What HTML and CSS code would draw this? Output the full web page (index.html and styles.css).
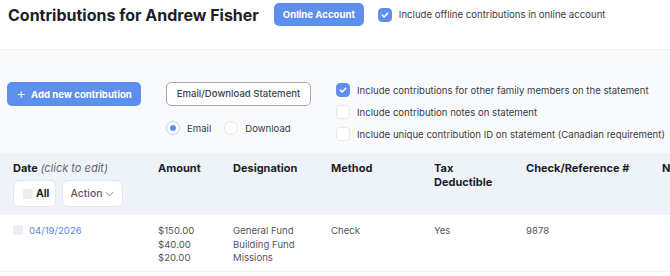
FILE: index.html
```html
<!DOCTYPE html>
<html lang="en">
<head>
  <meta charset="UTF-8">
  <title>Contributions</title>
  <link rel="stylesheet" href="styles.css">
</head>
<body>

  <header class="top">
    <h1>Contributions for Andrew Fisher</h1>
    <button class="btn btn-primary online">Online Account</button>
    <label class="check">
      <span class="box checked"><svg viewBox="0 0 14 14"><path d="M3.8 7.2 L6 9.3 L10.2 4.9" /></svg></span>
      Include offline contributions in online account
    </label>
  </header>

  <section class="toolbar">
    <button class="btn btn-primary add"><span class="plus">+</span>Add new contribution</button>

    <div class="statement">
      <button class="btn btn-outline">Email/Download Statement</button>
      <div class="radios">
        <label class="radio"><span class="dot on"></span>Email</label>
        <label class="radio"><span class="dot"></span>Download</label>
      </div>
    </div>

    <div class="options">
      <label class="check">
        <span class="box checked"><svg viewBox="0 0 14 14"><path d="M3.8 7.2 L6 9.3 L10.2 4.9" /></svg></span>
        Include contributions for other family members on the statement
      </label>
      <label class="check">
        <span class="box"></span>
        Include contribution notes on statement
      </label>
      <label class="check">
        <span class="box"></span>
        Include unique contribution ID on statement (Canadian requirement)
      </label>
    </div>
  </section>

  <table class="contribs">
    <colgroup>
      <col class="c-date">
      <col class="c-amount">
      <col class="c-desig">
      <col class="c-method">
      <col class="c-tax">
      <col class="c-ref">
      <col class="c-notes">
    </colgroup>
    <thead>
      <tr>
        <th class="first">
          Date <em>(click to edit)</em>
          <div class="head-tools">
            <button class="btn btn-light all"><span class="mini"></span>All</button>
            <button class="btn btn-light action">Action
              <svg viewBox="0 0 10 6"><path d="M1 1 L5 5 L9 1" /></svg>
            </button>
          </div>
        </th>
        <th>Amount</th>
        <th>Designation</th>
        <th>Method</th>
        <th>Tax<br>Deductible</th>
        <th>Check/Reference #</th>
        <th>Notes</th>
      </tr>
    </thead>
    <tbody>
      <tr>
        <td class="first"><span class="mini"></span><a href="#">04/19/2026</a></td>
        <td>$150.00<br>$40.00<br>$20.00</td>
        <td>General Fund<br>Building Fund<br>Missions</td>
        <td>Check</td>
        <td>Yes</td>
        <td>9878</td>
        <td></td>
      </tr>
    </tbody>
  </table>

</body>
</html>
```

FILE: styles.css
```css
body {
  margin: 0;
  font-family: Inter, "Noto Sans", sans-serif;
  font-size: 9.6px;
  color: #3a3a44;
  background: #fff;
  overflow: hidden;
  white-space: nowrap;
}

.top {
  display: flex;
  align-items: flex-start;
  height: 50px;
  padding: 3px 8px 0;
  box-sizing: border-box;
  border-bottom: 1px solid #f1f2f4;
}

h1 {
  margin: 0 15px 0 0;
  font-size: 16px;
  font-weight: 700;
  color: #1d1d27;
  line-height: 24px;
}

.btn {
  font-family: inherit;
  font-size: 9.6px;
  border-radius: 5px;
  cursor: pointer;
  line-height: 12px;
  white-space: nowrap;
  flex-shrink: 0;
}

.btn-primary {
  background: #5f8fec;
  color: #fff;
  border: none;
  font-weight: 700;
  height: 23px;
  padding: 0;
}

.online {
  width: 90px;
  margin-right: 14px;
}

.check {
  display: flex;
  align-items: center;
  gap: 7px;
  height: 23px;
  color: #3a3a44;
}

.box {
  width: 14px;
  height: 14px;
  flex-shrink: 0;
  box-sizing: border-box;
  border: 1px solid #e6e8ec;
  border-radius: 4px;
  background: #fff;
  display: inline-flex;
}

.box.checked {
  background: #5f8fec;
  border-color: #5f8fec;
}

.box svg {
  width: 12px;
  height: 12px;
  fill: none;
  stroke: #fff;
  stroke-width: 1.8;
  stroke-linecap: round;
  stroke-linejoin: round;
}

.toolbar {
  display: flex;
  align-items: flex-start;
  gap: 25px;
  background: #f9fafb;
  height: 103px;
  box-sizing: border-box;
  padding: 32px 7px 0;
}

.add {
  width: 134px;
  height: 24px;
}

.plus {
  font-weight: 300;
  font-size: 15px;
  margin-right: 5px;
  vertical-align: -1px;
}

.statement {
  flex-shrink: 0;
}

.btn-outline {
  background: #fff;
  border: 1px solid #a9a9b0;
  color: #44444c;
  font-weight: 500;
  height: 24px;
  width: 145px;
  padding: 0;
}

.radios {
  display: flex;
  gap: 13px;
  margin-top: 15px;
}

.radio {
  display: flex;
  align-items: center;
  gap: 7px;
  color: #3a3a44;
}

.dot {
  width: 14px;
  height: 14px;
  box-sizing: border-box;
  border: 1px solid #e3e6ea;
  border-radius: 50%;
  background: #fff;
  position: relative;
}

.dot.on {
  border-color: #b9cdf5;
}

.dot.on::after {
  content: "";
  position: absolute;
  left: 3px;
  top: 3px;
  width: 6px;
  height: 6px;
  border-radius: 50%;
  background: #5f8fec;
}

.options {
  display: flex;
  flex-direction: column;
  flex-shrink: 0;
  margin-top: -3px;
}

.options .check {
  height: 22px;
}

.contribs {
  border-collapse: collapse;
  table-layout: fixed;
  width: 742px;
}

.c-date { width: 158px; }
.c-amount { width: 75px; }
.c-desig { width: 98px; }
.c-method { width: 103px; }
.c-tax { width: 92px; }
.c-ref { width: 136px; }
.c-notes { width: 80px; }

.contribs th {
  background: #eef3fa;
  text-align: left;
  vertical-align: top;
  font-size: 11px;
  font-weight: 700;
  color: #1d1d27;
  padding: 8px 0 8px;
  line-height: 14px;
  height: 46px;
}

.contribs .first {
  padding-left: 13px;
}

.contribs th em {
  font-weight: 400;
  color: #666670;
}

.head-tools {
  display: flex;
  gap: 6px;
  margin-top: 5px;
}

.btn-light {
  background: #fff;
  border: 1px solid #e4e6ea;
  height: 27px;
  font-size: 10.4px;
  color: #1d1d27;
  font-weight: 700;
  display: flex;
  align-items: center;
  gap: 3px;
  border-radius: 6px;
}

.all {
  width: 43px;
  padding: 0 0 0 9px;
}

.action {
  width: 61px;
  justify-content: center;
  padding: 0;
  font-weight: 500;
  color: #5a5a64;
}

.action svg {
  width: 9px;
  height: 6px;
  fill: none;
  stroke: #777;
  stroke-width: 1;
}

.mini {
  display: inline-block;
  width: 10px;
  height: 10px;
  border-radius: 2px;
  background: #eceef1;
}

.contribs td {
  vertical-align: top;
  padding: 9px 0 6px;
  line-height: 13.5px;
  color: #55555e;
  border-bottom: 1px solid #f1f2f4;
  height: 40px;
}

.contribs td .mini {
  margin-right: 6px;
  vertical-align: -1px;
}

.contribs a {
  color: #5b88e8;
  text-decoration: none;
}
```
